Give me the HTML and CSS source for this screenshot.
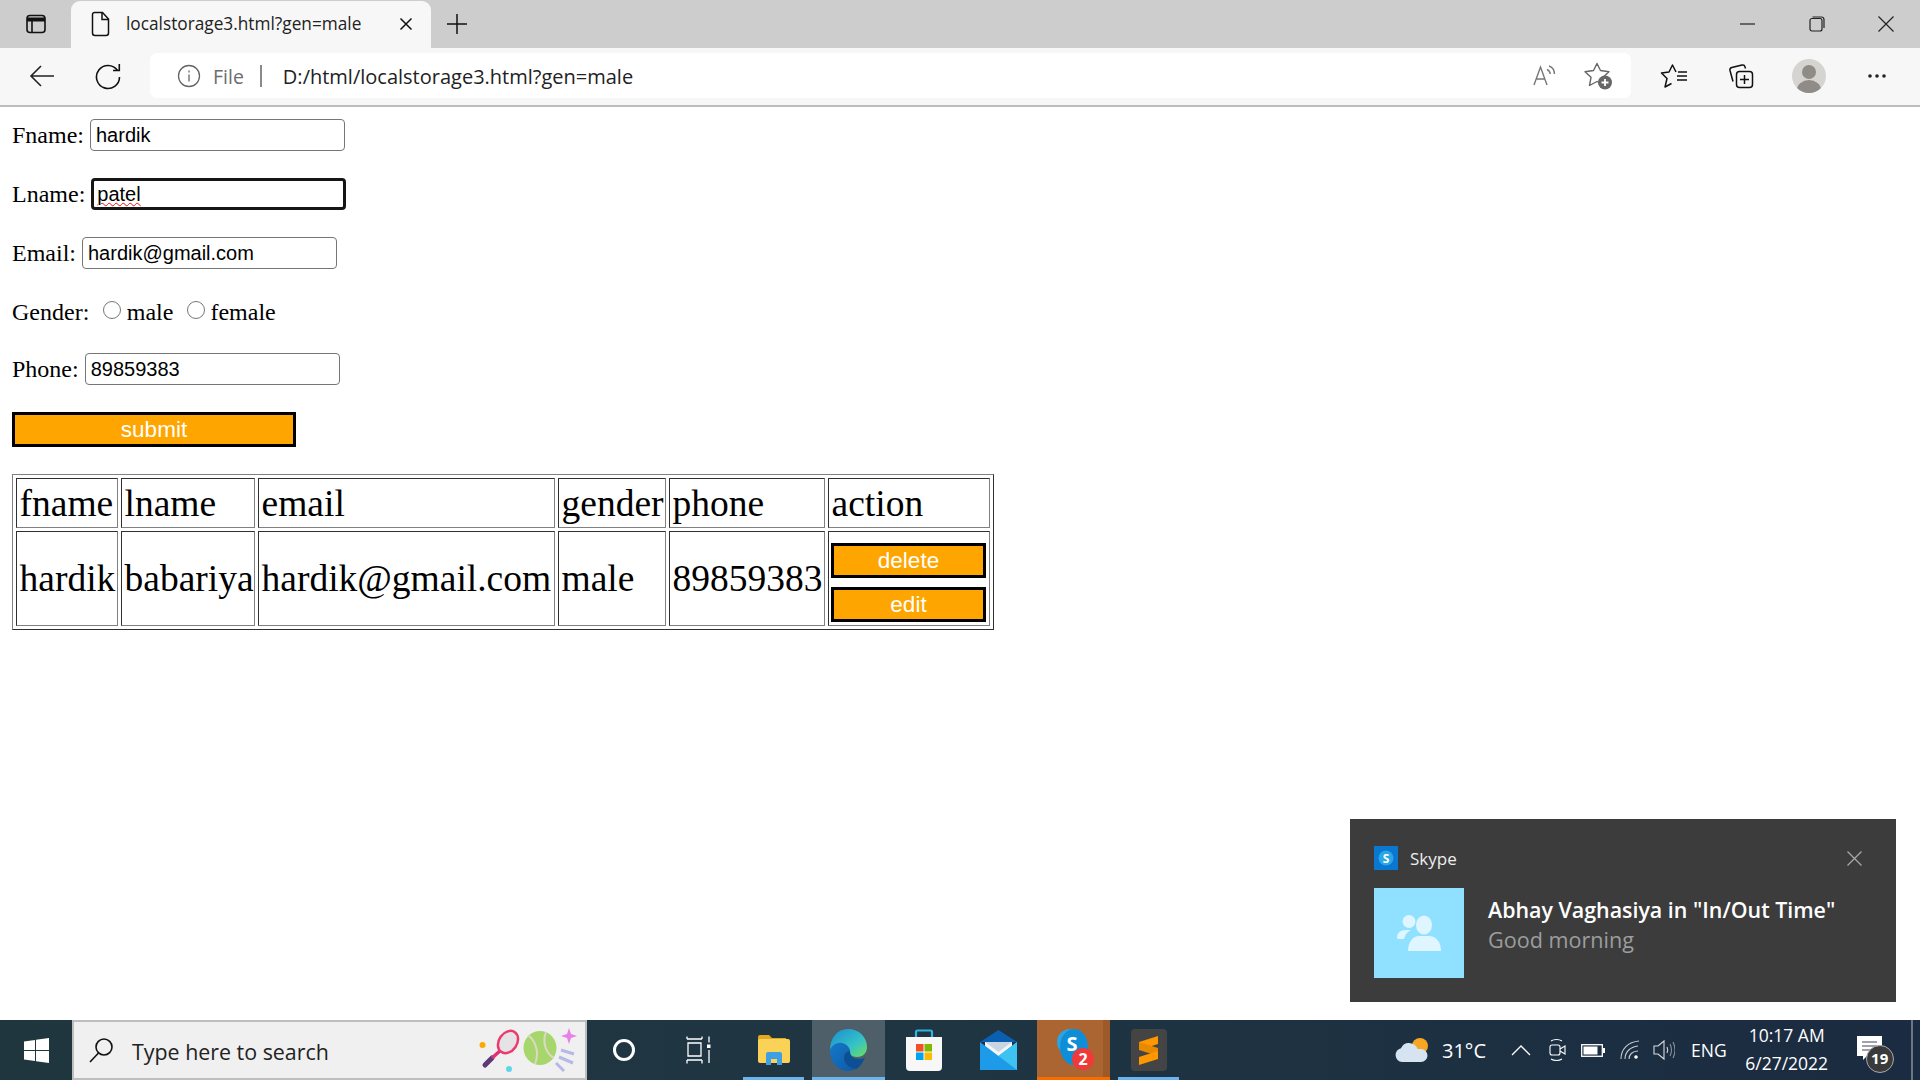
FILE: index.html
```html
<!DOCTYPE html>
<html lang="en">
<head>
    <meta charset="UTF-8">
    <title>localstorage3.html?gen=male</title>
    <link rel="stylesheet" href="styles.css">
</head>
<body>
    <!-- browser tab strip -->
    <div class="tabstrip">
        <div class="tab-side">
            <svg width="24" height="24" viewBox="0 0 24 24" fill="none" stroke="#111" stroke-width="1.6"><rect x="3" y="3.5" width="18" height="17" rx="3"/><path d="M3 7.5h18" stroke-width="4"/><path d="M8 8v12"/></svg>
        </div>
        <div class="tab">
            <svg class="tab-doc" width="20" height="26" viewBox="0 0 20 26" fill="none" stroke="#111" stroke-width="1.5"><path d="M3.5 1.5h8l6 6.5v14a2.5 2.5 0 0 1-2.5 2.5H4A2.5 2.5 0 0 1 1.500 22V3.500a2 2 0 0 1 2-2z"/><path d="M11 1.500v7h6.500"/></svg>
            <span class="tab-title">localstorage3.html?gen=male</span>
            <svg class="tab-close" width="14" height="14" viewBox="0 0 14 14" stroke="#111" stroke-width="1.5"><path d="M1.500 1.500l11 11M12.500 1.500l-11 11"/></svg>
        </div>
        <div class="tab-new">
            <svg width="22" height="22" viewBox="0 0 22 22" stroke="#111" stroke-width="1.500"><path d="M11 1v20M1 11h20"/></svg>
        </div>
        <div class="win-btns">
            <div class="win-btn"><svg width="16" height="16" viewBox="0 0 16 16" stroke="#222" stroke-width="1.200"><path d="M0 8h15"/></svg></div>
            <div class="win-btn"><svg width="16" height="16" viewBox="0 0 16 16" fill="none" stroke="#222" stroke-width="1.200"><rect x="1" y="2.500" width="12" height="12.500" rx="2"/><path d="M3.500 1h9a2.500 2.500 0 0 1 2.500 2.500V12"/></svg></div>
            <div class="win-btn"><svg width="16" height="16" viewBox="0 0 16 16" stroke="#222" stroke-width="1.200"><path d="M.5.500l15 15M15.500.500l-15 15"/></svg></div>
        </div>
    </div>

    <!-- address bar row -->
    <div class="toolbar">
        <div class="tool-left">
            <svg width="26" height="24" viewBox="0 0 26 24" fill="none" stroke="#222" stroke-width="1.600"><path d="M25 12H2M12 2 2 12l10 10"/></svg>
        </div>
        <div class="tool-left">
            <svg width="26" height="28" viewBox="0 0 26 28" fill="none" stroke="#111" stroke-width="1.600"><path d="M18 8.500h6.300V2"/><path d="M22.500 8.500A11.500 11.500 0 1 0 24.500 15"/></svg>
        </div>
        <div class="address">
            <svg class="addr-info" width="24" height="24" viewBox="0 0 24 24" fill="none" stroke="#666" stroke-width="1.300"><circle cx="12" cy="12" r="10.500"/><path d="M12 10.500v7M12 6.500v2"/></svg>
            <span class="addr-file">File</span>
            <span class="addr-sep"></span>
            <span class="addr-url">D:/html/localstorage3.html?gen=male</span>
            <svg class="addr-read" width="26" height="24" viewBox="0 0 26 24" fill="none" stroke="#777" stroke-width="1.400"><path d="M1 21 7.500 3l6.500 18M3.200 15h8.600"/><path d="M14 5.500c2 .8 3 2.500 3.300 4.500M16 2c3.500 1 5.300 4 5.500 8"/></svg>
            <svg class="addr-star" width="28" height="28" viewBox="0 0 28 28" stroke-linejoin="round"><path d="M13 1.500 16.500 8.500 25 9.700 19 15.300 20.500 23.500 13 19.500 5.500 23.500 7 15.300 1 9.700 9.500 8.500z" fill="none" stroke="#666" stroke-width="1.400"/><circle cx="21" cy="20.500" r="7" fill="#666"/><path d="M21 17v7M17.500 20.500h7" stroke="#fff" stroke-width="1.800"/></svg>
        </div>
        <div class="tool-right">
            <svg width="28" height="26" viewBox="0 0 28 26" fill="none" stroke="#111" stroke-width="1.500" stroke-linejoin="round"><path d="M17 9 13.500 2 10 9 2.500 10 8 15.500 6 24 12.500 20.500"/><path d="M19 9h9M18 13h10M18 17h10"/></svg>
        </div>
        <div class="tool-right">
            <svg width="26" height="26" viewBox="0 0 26 26" fill="none" stroke="#111" stroke-width="1.500"><path d="M5 18.500 2 7.500a2.500 2.500 0 0 1 1.800-3L14 2a2.500 2.500 0 0 1 3 1.800l.5 1.700"/><rect x="8.500" y="8.500" width="16" height="16" rx="3"/><path d="M16.500 12v9M12 16.500h9"/></svg>
        </div>
        <div class="tool-right">
            <div class="avatar"><span class="avatar-head"></span><span class="avatar-body"></span></div>
        </div>
        <div class="tool-right">
            <svg width="20" height="6" viewBox="0 0 20 6" fill="#222"><circle cx="3" cy="3" r="1.800"/><circle cx="10" cy="3" r="1.800"/><circle cx="17" cy="3" r="1.800"/></svg>
        </div>
    </div>

    <!-- the actual page -->
    <div class="page">
        <form class="user-form" onsubmit="return false">
            <div class="form-row">
                <label>Fname:</label>
                <input type="text" value="hardik" spellcheck="false">
            </div>
            <div class="form-row">
                <label>Lname:</label>
                <div class="field-wrap">
                    <input class="focused" type="text" value="patel" spellcheck="false">
                    <span class="squiggle">patel</span>
                </div>
            </div>
            <div class="form-row">
                <label>Email:</label>
                <input type="text" value="hardik@gmail.com" spellcheck="false">
            </div>
            <div class="form-row gender-row">
                <label>Gender:</label>
                <input class="radio radio-male" type="radio" name="gender"><span>male</span>
                <input class="radio radio-female" type="radio" name="gender"><span>female</span>
            </div>
            <div class="form-row">
                <label>Phone:</label>
                <input type="text" value="89859383" spellcheck="false">
            </div>
            <button class="btn-submit" type="submit">submit</button>
        </form>

        <table class="user-table">
            <thead>
                <tr>
                    <th class="col-fname">fname</th>
                    <th class="col-lname">lname</th>
                    <th class="col-email">email</th>
                    <th class="col-gender">gender</th>
                    <th class="col-phone">phone</th>
                    <th class="col-action">action</th>
                </tr>
            </thead>
            <tbody>
                <tr>
                    <td>hardik</td>
                    <td>babariya</td>
                    <td>hardik@gmail.com</td>
                    <td>male</td>
                    <td>89859383</td>
                    <td class="actions">
                        <button class="btn-row" type="button">delete</button>
                        <button class="btn-row" type="button">edit</button>
                    </td>
                </tr>
            </tbody>
        </table>
    </div>

    <!-- Skype toast -->
    <div class="toast">
        <div class="toast-head">
            <svg width="24" height="24" viewBox="0 0 24 24"><rect width="24" height="24" fill="#0a78d0"/><circle cx="12" cy="12" r="7.500" fill="#2ba7e6"/><text x="12" y="16.500" text-anchor="middle" class="toast-s">S</text></svg>
            <span class="toast-app">Skype</span>
            <svg class="toast-close" width="15" height="15" viewBox="0 0 15 15" stroke="#a8a8a8" stroke-width="1.300"><path d="M.5.500l14 14M14.500.500l-14 14"/></svg>
        </div>
        <div class="toast-body">
            <div class="toast-pic">
                <svg width="44" height="38" viewBox="0 0 44 38" fill="#dff5ff"><circle cx="12" cy="7.500" r="6.500"/><path d="M0 24c0-5 3-8 9-8h5c-4 2-6 5-7 9H1z"/><ellipse cx="27" cy="11" rx="8" ry="9.500"/><path d="M11 37c0-9 5-15 11-15h10c7 0 12 6 12 15z"/></svg>
            </div>
            <div class="toast-text">
                <div class="toast-title">Abhay Vaghasiya in "In/Out Time"</div>
                <div class="toast-msg">Good morning</div>
            </div>
        </div>
    </div>

    <!-- windows taskbar -->
    <div class="taskbar">
        <div class="start">
            <svg width="25" height="25" viewBox="0 0 25 25" fill="#fff"><path d="M0 3.500 11 2v10H0zM12 1.800 25 0v12H12zM0 13h11v10L0 21.500zM12 13h13v12l-13-1.800z"/></svg>
        </div>
        <div class="search">
            <svg class="search-icon" width="26" height="26" viewBox="0 0 26 26" fill="none" stroke="#111" stroke-width="1.600"><circle cx="16" cy="10" r="8"/><path d="M10.500 16 2 25"/></svg>
            <span class="search-text">Type here to search</span>
            <svg class="doodle" width="98" height="50" viewBox="0 0 98 50">
                <circle cx="3.500" cy="20" r="3" fill="#ffa800"/>
                <circle cx="30" cy="44" r="3" fill="#5fd6ea"/>
                <path d="M6 40 13 33" stroke="#5b3a78" stroke-width="5" stroke-linecap="round"/>
                <path d="M13 33 22 25" stroke="#e0307a" stroke-width="3.500"/>
                <ellipse cx="29" cy="17" rx="9" ry="12" transform="rotate(35 29 17)" fill="#e5e3e5" stroke="#ea3a6e" stroke-width="2.500"/>
                <ellipse cx="61" cy="23" rx="16.500" ry="17" fill="#a7d66c"/>
                <path d="M49 10c9 7 11 19 7 29M67 7c-4 10 0 22 8 26" fill="none" stroke="#dcd9c8" stroke-width="2"/>
                <path d="M90 3l2 6 6 2-6 2-2 6-2-6-6-2 6-2z" fill="#e97fe8"/>
                <path d="M82 25l13 4M80 32l14 6M77 38l8 8" stroke="#b6b8e6" stroke-width="3"/>
            </svg>
        </div>
        <div class="task-slot">
            <svg width="24" height="24" viewBox="0 0 24 24" fill="none" stroke="#fff" stroke-width="3"><circle cx="12" cy="12" r="9.500"/></svg>
        </div>
        <div class="task-slot">
            <svg width="26" height="28" viewBox="0 0 26 28" fill="none" stroke="#fff" stroke-width="1.300"><path d="M1 3h15M1 .5v2.500M16 .5v2.500M2 7h13v13H2zM1 24h15M1 24v3.500M16 24v3.500M23 .5v6M23 14v13"/><rect x="21" y="8.500" width="3.500" height="3.500" fill="#fff" stroke="none"/></svg>
        </div>
        <div class="task-slot is-open">
            <svg width="32" height="30" viewBox="0 0 32 30"><path d="M0 2a2 2 0 0 1 2-2h9l3 3h14v6H0z" fill="#e2a81f"/><rect y="4" width="32" height="24" rx="2" fill="#fbd258"/><path d="M8 30V19a2 2 0 0 1 2-2h12a2 2 0 0 1 2 2v11h-5v-6h-6v6z" fill="#3ea0e3"/></svg>
        </div>
        <div class="task-slot is-open is-active">
            <svg width="37" height="42" viewBox="0 0 37 42">
                <defs>
                    <linearGradient id="edgeTop" x1="0" y1="0" x2="1" y2="1"><stop offset="0" stop-color="#1a8dd0"/><stop offset=".6" stop-color="#35c1c8"/><stop offset="1" stop-color="#6ee05a"/></linearGradient>
                    <linearGradient id="edgeLow" x1="0" y1="0" x2="1" y2="1"><stop offset="0" stop-color="#1578c9"/><stop offset="1" stop-color="#0b5ba6"/></linearGradient>
                </defs>
                <path d="M18 0c11 0 19 8 19 18 0 6-4 10-10 10-3 0-6-1-7-3 0-4-2-9-8-10C6 14 1 18 0 22 0 9 7 0 18 0z" fill="url(#edgeTop)"/>
                <path d="M0 22c1-5 6-9 12-8 5 1 8 5 8 8-3 0-6 3-6 7 0 5 4 10 12 11-3 1-5 2-8 2C8 42 0 33 0 22z" fill="url(#edgeLow)"/>
                <path d="M14 29c0-4 3-7 6-7 0 5 3 8 9 8 3 0 5-1 6-2-2 6-6 11-9 12-8-1-12-6-12-11z" fill="#0d4f94"/>
            </svg>
        </div>
        <div class="task-slot">
            <svg width="36" height="42" viewBox="0 0 36 42"><path d="M10 10V3a1.500 1.500 0 0 1 1.500-1.500h13A1.500 1.500 0 0 1 26 3v7" fill="none" stroke="#2fb4e6" stroke-width="2.200"/><path d="M0 8h36v30a4 4 0 0 1-4 4H4a4 4 0 0 1-4-4z" fill="#f7f7f7"/><rect x="10" y="15" width="7.500" height="7.500" fill="#f25022"/><rect x="18.500" y="15" width="7.500" height="7.500" fill="#7fba00"/><rect x="10" y="23.500" width="7.500" height="7.500" fill="#00a4ef"/><rect x="18.500" y="23.500" width="7.500" height="7.500" fill="#ffb900"/></svg>
        </div>
        <div class="task-slot">
            <svg width="37" height="40" viewBox="0 0 37 40"><path d="M18.500 0 37 12H0z" fill="#0b5fb0"/><path d="M5 12h27v14H5z" fill="#f2f6fa"/><path d="M5 12 18.500 22 32 12" fill="#c9d6e2"/><path d="M0 12l18.500 14L37 12v28H0z" fill="#1e9be8"/><path d="M37 12v28L18.500 26z" fill="#3dc3f2"/></svg>
        </div>
        <div class="task-slot is-alert">
            <span class="alert-strip"></span>
            <svg width="38" height="44" viewBox="0 0 38 44"><circle cx="13" cy="15" r="13" fill="#2aa4e4"/><ellipse cx="17" cy="20" rx="14" ry="18" fill="#0f8ed8"/><text x="15" y="24" text-anchor="middle" class="skype-s">S</text><circle cx="26" cy="32" r="11" fill="#f03a3a"/><text x="26" y="38" text-anchor="middle" class="skype-count">2</text></svg>
        </div>
        <div class="task-slot is-open">
            <div class="sublime">
                <svg width="19" height="29" viewBox="0 0 19 29"><path d="M19 0v8L0 14V6z" fill="#ff9800"/><path d="M0 14l19 6v-8L0 6z" fill="#e88a00"/><path d="M19 15v8L0 29v-8z" fill="#ff9800"/></svg>
            </div>
        </div>

        <div class="tray">
            <svg class="tray-cloud" width="34" height="26" viewBox="0 0 34 26"><circle cx="25" cy="9" r="8" fill="#f5a623"/><path d="M7 25a7 7 0 0 1-1-13.800C8 7 12 5 16 6.500c4 .5 6 3.500 6.500 5.500H26a6.500 6.500 0 0 1 0 13z" fill="#d5e4f0"/></svg>
            <span class="tray-temp">31°C</span>
            <svg class="tray-chevron" width="20" height="11" viewBox="0 0 20 11" fill="none" stroke="#fff" stroke-width="1.300"><path d="M1 10l9-9 9 9"/></svg>
            <svg class="tray-meet" width="17" height="24" viewBox="0 0 17 24" fill="none" stroke="#fff" stroke-width="1.100"><rect x="1" y="7" width="10" height="10" rx="2"/><path d="M11 11l5-3v8l-5-3M2 3c3-2 8-2 11 0M2 21c3 2 8 2 11 0"/></svg>
            <svg class="tray-batt" width="24" height="13" viewBox="0 0 24 13"><rect x=".7" y=".7" width="20.600" height="11.600" fill="none" stroke="#fff" stroke-width="1.300"/><rect x="2.500" y="2.500" width="14" height="8" fill="#fff"/><rect x="22" y="4" width="2" height="5" fill="#fff"/></svg>
            <svg class="tray-wifi" width="20" height="20" viewBox="0 0 20 20" fill="none" stroke="#c8ccd2" stroke-width="1.100"><path d="M1 19C1 9 8 2 19 1M5 19c0-7 5-12 13-13M9 19c0-4 3-8 9-8"/><circle cx="16" cy="17" r="1.800" fill="#fff" stroke="none"/></svg>
            <svg class="tray-vol" width="22" height="22" viewBox="0 0 22 22" fill="none" stroke="#d8dade" stroke-width="1.100"><path d="M1 7h4l6-5v18l-6-5H1zM14 8c1 2 1 4 0 6"/><path d="M17 5c2 4 2 8 0 12M20 3c2.500 5 2.500 11 0 16" stroke="#8792a0"/></svg>
            <span class="tray-lang">ENG</span>
            <div class="tray-clock"><span>10:17 AM</span><span>6/27/2022</span></div>
            <div class="tray-note">
                <svg width="25" height="24" viewBox="0 0 25 24"><path d="M0 0h25v20H10l-4 4v-4H0z" fill="#fff"/><path d="M5 6h15M5 10h15M5 14h10" stroke="#445" stroke-width="1.200"/></svg>
                <span class="note-count">19</span>
            </div>
            <span class="tray-edge"></span>
        </div>
    </div>
</body>
</html>
```
FILE: styles.css
```css
* {
    box-sizing: border-box;
}
html, body {
    margin: 0;
    height: 1080px;
    overflow: hidden;
}
body {
    position: relative;
    display: flex;
    flex-direction: column;
    background-color: #fff;
    font-family: "Liberation Serif", serif;
    font-size: 24px;
    color: #000;
}
svg {
    display: block;
    flex: none;
}

/* browser chrome */
.tabstrip {
    height: 48px;
    display: flex;
    background-color: #cdcdcd;
    font-family: "Open Sans", sans-serif;
}
.tab-side {
    width: 71px;
    display: flex;
    align-items: center;
    justify-content: center;
}
.tab {
    width: 360px;
    margin-top: 1px;
    padding: 0 18px 2px 20px;
    display: flex;
    align-items: center;
    background-color: #f7f7f7;
    border-radius: 9px 9px 0 0;
}
.tab-title {
    margin-left: 15px;
    font-size: 17.25px;
    color: #222;
    white-space: nowrap;
}
.tab-close {
    margin-left: auto;
}
.tab-new {
    width: 52px;
    display: flex;
    align-items: center;
    justify-content: center;
}
.win-btns {
    margin-left: auto;
    display: flex;
}
.win-btn {
    width: 69px;
    display: flex;
    align-items: center;
    justify-content: center;
}
.toolbar {
    height: 59px;
    padding: 6px 0 8px 9px;
    display: flex;
    align-items: center;
    background-color: #f7f7f7;
    border-bottom: 2px solid #bdbdbd;
}
.tool-left {
    width: 66px;
    display: flex;
    justify-content: center;
}
.address {
    width: 1481px;
    height: 45px;
    margin: 0 8px 0 9px;
    padding: 0 19px 0 27px;
    display: flex;
    align-items: center;
    background-color: #fff;
    border-radius: 7px;
    font-family: "Open Sans", sans-serif;
}
.addr-file {
    margin-left: 12px;
    padding-top: 2px;
    font-size: 19.5px;
    color: #6d6d6d;
}
.addr-sep {
    width: 2px;
    height: 22px;
    margin: 0 21px 0 16px;
    background-color: #8a8a8a;
}
.addr-url {
    padding-top: 2px;
    font-size: 20px;
    color: #222;
}
.addr-read {
    margin-left: auto;
}
.addr-star {
    margin-left: 25px;
}
.tool-right {
    width: 68px;
    display: flex;
    justify-content: center;
}
.avatar {
    position: relative;
    width: 34px;
    height: 34px;
    border-radius: 50%;
    overflow: hidden;
    background-color: #d5d4d0;
}
.avatar-head {
    position: absolute;
    left: 10px;
    top: 6px;
    width: 14px;
    height: 14px;
    border-radius: 50%;
    background-color: #8f8b87;
}
.avatar-body {
    position: absolute;
    left: 5px;
    top: 21px;
    width: 24px;
    height: 20px;
    border-radius: 50%;
    background-color: #8f8b87;
}

/* form + table */
.page {
    flex: 1;
    padding: 12px 12px 0;
    display: flex;
    flex-direction: column;
    gap: 27px;
    align-items: flex-start;
}
.user-form {
    display: flex;
    flex-direction: column;
    gap: 27px;
}
.form-row {
    display: flex;
    align-items: center;
    gap: 6px;
    height: 32px;
}
.form-row input[type="text"] {
    width: 255px;
    height: 32px;
    padding: 0 5px;
    border: 1px solid #767676;
    border-radius: 4px;
    font-family: "Liberation Sans", sans-serif;
    font-size: 20px;
    color: #000;
    background-color: #fff;
}
.form-row input.focused {
    border: 3px solid #161616;
    padding: 0 3px;
}
.field-wrap {
    position: relative;
}
.squiggle {
    position: absolute;
    left: 6px;
    top: 4px;
    font-family: "Liberation Sans", sans-serif;
    font-size: 20px;
    color: transparent;
    text-decoration: underline wavy #e81010 1.4px;
    text-underline-offset: 2px;
    pointer-events: none;
}
.gender-row {
    height: 30px;
    padding-top: 2px;
    gap: 0;
}
.radio {
    width: 18px;
    height: 18px;
    margin: 0 5.5px 4px 0;
}
.radio-male {
    margin-left: 14px;
}
.radio-female {
    margin-left: 14px;
    margin-right: 5px;
}
.btn-submit, .btn-row {
    background-color: orange;
    border: 3px solid #000;
    color: #fff;
    font-family: "Liberation Sans", sans-serif;
    font-size: 22.5px;
    padding: 0;
    height: 35px;
}
.btn-submit {
    width: 284px;
}
.user-table {
    width: 982px;
    table-layout: fixed;
    border: 1px solid #808080;
    border-bottom-color: #303030;
    border-right-color: #303030;
    border-spacing: 3px;
    font-size: 37.5px;
}
.user-table th, .user-table td {
    border: 1px solid #808080;
    border-top-color: #303030;
    border-left-color: #303030;
    padding: 0 1.5px 0 2.5px;
    font-weight: normal;
    text-align: left;
    white-space: nowrap;
}
.user-table th {
    height: 50px;
    padding-top: 1px;
}
.user-table td {
    height: 95px;
}
.col-fname { width: 102px; }
.col-lname { width: 134px; }
.col-email { width: 297px; }
.col-gender { width: 108px; }
.col-phone { width: 156px; }
.col-action { width: 162px; }
.user-table td.actions {
    padding: 11px 2px 0;
    vertical-align: top;
}
.btn-row {
    display: block;
    width: 155px;
    margin-bottom: 9px;
}
.btn-row:last-child {
    margin-bottom: 0;
}

/* toast */
.toast {
    position: absolute;
    left: 1350px;
    top: 819px;
    width: 546px;
    height: 183px;
    padding: 27px 24px 0;
    background-color: #3c3c3c;
    font-family: "Open Sans", sans-serif;
    color: #fff;
}
.toast-head {
    display: flex;
    align-items: center;
    height: 24px;
}
.toast-s {
    font-family: "Open Sans", sans-serif;
    font-size: 12px;
    font-weight: 700;
    fill: #fff;
}
.toast-app {
    margin-left: 12px;
    font-size: 17px;
    color: #eee;
}
.toast-close {
    margin-left: auto;
    margin-right: 10px;
}
.toast-body {
    display: flex;
    margin-top: 18px;
}
.toast-pic {
    width: 90px;
    height: 90px;
    display: flex;
    align-items: center;
    justify-content: center;
    background-color: #8fe1ff;
}
.toast-text {
    margin: 8px 0 0 24px;
}
.toast-title {
    font-size: 21.4px;
    font-weight: 600;
    line-height: 28px;
}
.toast-msg {
    font-size: 21.6px;
    line-height: 31px;
    color: #9d9d9d;
}

/* taskbar */
.taskbar {
    height: 60px;
    display: flex;
    background: linear-gradient(90deg, #20363f, #1f3542 50%, #1b2b41);
    font-family: "Open Sans", sans-serif;
    color: #fff;
}
.start {
    width: 72px;
    display: flex;
    align-items: center;
    justify-content: center;
}
.search {
    width: 515px;
    padding: 0 8px 0 14px;
    display: flex;
    align-items: center;
    background-color: #f0f0f0;
    border: 2px solid #bebebe;
}
.search-text {
    margin-left: 18px;
    padding-top: 3px;
    font-size: 21.4px;
    color: #222;
}
.doodle {
    margin-left: auto;
}
.task-slot {
    position: relative;
    width: 73px;
    margin-right: 2px;
    display: flex;
    align-items: center;
    justify-content: center;
}
.is-open::after {
    content: "";
    position: absolute;
    left: 6px;
    right: 6px;
    bottom: 0;
    height: 3px;
    background-color: #6db3ec;
}
.is-active {
    background-color: #4e5f69;
}
.is-active::after {
    left: 0;
    right: 0;
}
.is-alert {
    padding-left: 4px;
    background-color: #ab6532;
    border-bottom: 3px solid #f76b00;
}
.alert-strip {
    position: absolute;
    right: 0;
    top: 0;
    bottom: 0;
    width: 7px;
    background-color: #9c5a2a;
}
.skype-s {
    font-family: "Open Sans", sans-serif;
    font-size: 20px;
    font-weight: 700;
    fill: #fff;
}
.skype-count {
    font-family: "Open Sans", sans-serif;
    font-size: 16px;
    font-weight: 700;
    fill: #fff;
}
.sublime {
    width: 36px;
    height: 42px;
    display: flex;
    align-items: center;
    justify-content: center;
    background-color: #444;
    border-radius: 4px;
}
.tray {
    flex: 1;
    position: relative;
    display: flex;
    align-items: center;
    padding-left: 208px;
}
.tray-temp {
    margin-left: 13px;
    font-size: 20px;
}
.tray-chevron {
    margin-left: 25px;
}
.tray-meet {
    margin-left: 18px;
}
.tray-batt {
    margin-left: 15px;
}
.tray-wifi {
    margin-left: 15px;
}
.tray-vol {
    margin-left: 13px;
}
.tray-lang {
    margin-left: 16px;
    font-size: 17.5px;
}
.tray-clock {
    width: 84px;
    margin-left: 18px;
    display: flex;
    flex-direction: column;
    align-items: center;
    gap: 6px;
    margin-top: -2px;
    font-size: 17.5px;
    line-height: 22px;
    white-space: nowrap;
}
.tray-note {
    position: relative;
    margin-left: 28px;
    margin-top: -4px;
}
.note-count {
    position: absolute;
    left: 9px;
    top: 9px;
    width: 28px;
    height: 28px;
    border-radius: 50%;
    background-color: #3a3a3a;
    border: 1px solid #aaa;
    font-size: 15px;
    font-weight: 700;
    line-height: 25px;
    text-align: center;
}
.tray-edge {
    position: absolute;
    right: 7px;
    top: 0;
    bottom: 0;
    width: 2px;
    background-color: #6c7680;
}
```
